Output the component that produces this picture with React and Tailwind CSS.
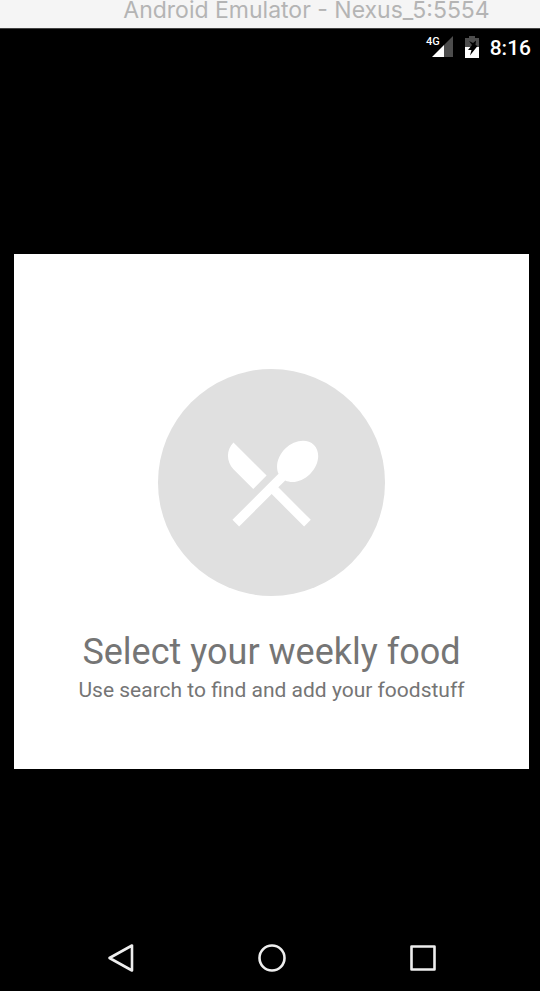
function SignalIcon() {
  return (
    <svg viewBox="0 0 28 24" className="h-6 w-7" role="img" aria-label="4G signal">
      <path d="M28 0v21H19V9z" fill="#4d4d4d" />
      <path d="M19 9v12H7z" fill="#fff" />
      <text x="1" y="9" className="fill-white font-['Roboto'] text-[11px] font-medium">4G</text>
    </svg>
  );
}

function BatteryIcon() {
  return (
    <svg viewBox="0 0 16 24" className="h-6 w-4" role="img" aria-label="Battery charging">
      <path d="M5 0h6v2h4v9H1V2h4z" fill="#4d4d4d" />
      <path d="M1 11h14v11H1z" fill="#fff" />
      <path d="M5 5l4 2 3-2.500-.5 4.500 2 1L6 19.500 7.500 14H4l4-5z" fill="#000" />
    </svg>
  );
}

function DiningIcon() {
  return (
    <svg viewBox="0 0 24 24" className="w-1/2" fill="#fff" aria-hidden="true">
      <path d="M8.1 13.34l2.83-2.83L3.91 3.5c-1.56 1.56-1.56 4.09 0 5.66l4.19 4.18zm6.78-1.81c1.53.71 3.68.21 5.27-1.38 1.91-1.91 2.28-4.65.81-6.12-1.46-1.46-4.2-1.1-6.12.81-1.59 1.59-2.09 3.74-1.38 5.27L3.7 19.87l1.41 1.41L12 14.41l6.88 6.88 1.41-1.41L13.41 13l1.47-1.47z" />
    </svg>
  );
}

function NavButton({ label, children }) {
  return (
    <button type="button" aria-label={label} className="flex h-full w-[151px] items-center justify-center">
      <svg viewBox="0 0 32 32" className="size-8" fill="none" stroke="#eee" strokeWidth="2.600" strokeLinejoin="round">
        {children}
      </svg>
    </button>
  );
}

export default function App() {
  return (
    <div className="flex min-h-screen flex-col bg-black font-['Roboto',sans-serif] antialiased">
      <header className="flex h-7 items-start justify-center bg-[#f5f5f5] pl-[73px]">
        <h1 className="font-['Inter',sans-serif] text-[23px] leading-5 whitespace-nowrap text-[#b4b4b4]">
          Android Emulator - Nexus_5:5554
        </h1>
      </header>
      <div className="flex h-[38px] items-center justify-end border-t border-[#444] pr-[9px] text-white">
        <SignalIcon />
        <span className="ml-[11px] flex">
          <BatteryIcon />
        </span>
        <time className="ml-2.5 text-[21px] leading-6 font-medium">8:16</time>
      </div>
      <main className="flex flex-1 flex-col justify-center pt-8 pr-[11px] pl-3.5">
        <section className="flex aspect-square flex-col items-center bg-white pt-[115px] text-center text-[#757575]">
          <div className="flex aspect-square w-[44%] items-center justify-center rounded-full bg-[#e0e0e0]">
            <DiningIcon />
          </div>
          <h2 className="mt-[34px] text-[36px] leading-11 whitespace-nowrap">Select your weekly food</h2>
          <p className="mt-0.5 text-[21px] leading-7 whitespace-nowrap">Use search to find and add your foodstuff</p>
        </section>
      </main>
      <nav className="flex h-[66px] items-center justify-center pl-1" aria-label="System">
        <NavButton label="Back">
          <path d="M4.500 16L27 3.500v25z" />
        </NavButton>
        <NavButton label="Home">
          <circle cx="16" cy="16" r="12.500" />
        </NavButton>
        <NavButton label="Recent apps">
          <path d="M4.500 4.500h23v23h-23z" />
        </NavButton>
      </nav>
    </div>
  );
}
